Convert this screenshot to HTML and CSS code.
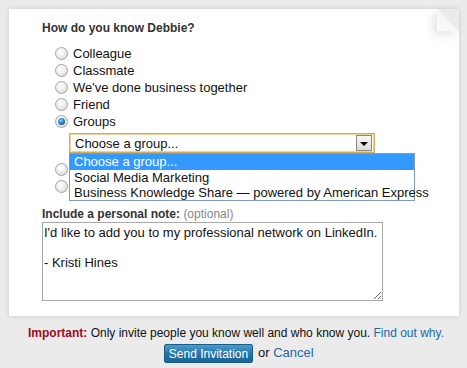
FILE: index.html
```html
<!DOCTYPE html>
<html lang="en">
<head>
    <meta charset="UTF-8">
    <title>Invite Debbie</title>
    <link rel="stylesheet" href="styles.css">
</head>
<body>
    <div class="page">
        <div class="card">
            <div class="fold"><span></span></div>

            <h2 class="question">How do you know Debbie?</h2>

            <ul class="choices">
                <li><span class="radio"></span>Colleague</li>
                <li><span class="radio"></span>Classmate</li>
                <li><span class="radio"></span>We've done business together</li>
                <li><span class="radio"></span>Friend</li>
                <li><span class="radio checked"></span>Groups</li>
            </ul>

            <div class="group-picker">
                <div class="select-box">
                    <span>Choose a group...</span>
                    <span class="arrow"></span>
                </div>
                <ul class="dropdown">
                    <li class="active">Choose a group...</li>
                    <li>Social Media Marketing</li>
                    <li>Business Knowledge Share &mdash; powered by American Express</li>
                </ul>
            </div>

            <!-- labels sit under the open dropdown -->
            <ul class="choices">
                <li><span class="radio"></span></li>
                <li><span class="radio"></span></li>
            </ul>

            <div class="note-label"><b>Include a personal note:</b> <span class="optional">(optional)</span></div>
            <textarea class="note">I'd like to add you to my professional network on LinkedIn.

- Kristi Hines</textarea>
        </div>

        <p class="notice"><strong>Important:</strong> Only invite people you know well and who know you. <a href="#">Find out why.</a></p>
        <div class="actions">
            <button class="button">Send Invitation</button>
            <span class="or">or <a href="#">Cancel</a></span>
        </div>
    </div>
</body>
</html>
```

FILE: styles.css
```css
* {
    margin: 0;
    padding: 0;
    box-sizing: border-box;
}

body {
    background: #ebebeb;
    font-family: 'Liberation Sans', Arial, sans-serif;
    color: #111;
    width: 467px;
    height: 368px;
    overflow: hidden;
}

.page {
    padding: 9px 8px 0 9px;
}

.card {
    position: relative;
    width: 450px;
    background: #fff;
    padding: 12px 33px 15px 33px;
    box-shadow: 0 0 5px rgba(0, 0, 0, 0.13);
}

/* turned page corner */
.fold {
    position: absolute;
    top: 0;
    right: 0;
    width: 22px;
    height: 22px;
    background: linear-gradient(to bottom left, #ebebeb 50%, transparent 50%);
    filter: drop-shadow(-4px 4px 4px rgba(0, 0, 0, 0.1));
}

.fold span {
    display: block;
    width: 100%;
    height: 100%;
    background: linear-gradient(to top right, #fcfcfc, #f0f0f0);
    clip-path: polygon(0 0, 0 100%, 100% 100%);
}

.question {
    font-size: 12px;
    line-height: 15px;
    color: #333;
}

.choices {
    list-style: none;
    margin-top: 9px;
    padding-left: 13px;
}

.choices li {
    display: flex;
    align-items: center;
    gap: 5px;
    height: 17px;
    font-size: 13px;
}

.radio {
    width: 13px;
    height: 13px;
    border-radius: 50%;
    border: 1px solid #a4a4a4;
    background: radial-gradient(circle at 40% 35%, #fff 0%, #f1f1f1 40%, #cfcfcf 100%);
    position: relative;
}

.radio.checked::after {
    content: '';
    position: absolute;
    top: 2px;
    left: 2px;
    width: 7px;
    height: 7px;
    border-radius: 50%;
    background: radial-gradient(circle at 40% 35%, #8ed0f5 0%, #2a82c0 45%, #0c3f6a 100%);
}

.group-picker {
    position: relative;
    margin: 3px 0 8px 27px;
    width: 306px;
}

.group-picker + .choices {
    margin-top: 0;
}

.select-box {
    display: flex;
    align-items: center;
    justify-content: space-between;
    height: 20px;
    border: 1px solid #d8ab52;
    box-shadow: inset 0 0 0 1px #ecd39a;
    padding: 0 2px 0 5px;
    font-size: 13px;
    background: #fff;
}

.arrow {
    position: relative;
    width: 16px;
    height: 16px;
    border: 1px solid #8a8a8a;
    background: linear-gradient(#f6f6f6, #dcdcdc);
}

.arrow::after {
    content: '';
    position: absolute;
    top: 6px;
    left: 3px;
    border-left: 4px solid transparent;
    border-right: 4px solid transparent;
    border-top: 4px solid #000;
}

.dropdown {
    position: absolute;
    top: 20px;
    left: 0;
    width: 346px;
    list-style: none;
    background: #fff;
    border: 1px solid #7f9db9;
    z-index: 2;
}

.dropdown li {
    height: 15px;
    line-height: 15px;
    font-size: 13px;
    padding-left: 4px;
    white-space: nowrap;
    color: #111;
}

.dropdown li.active {
    background: #3399ff;
    color: #fff;
    height: 16px;
}

.choices + .note-label {
    margin-top: 12px;
}

.note-label {
    font-size: 12px;
    line-height: 15px;
    color: #333;
}

.optional {
    color: #888;
}

.note {
    display: block;
    width: 341px;
    height: 79px;
    border: 1px solid #a9a9a9;
    padding: 2px 1px;
    font-family: 'Liberation Sans', Arial, sans-serif;
    font-size: 13px;
    line-height: 15px;
    color: #111;
    resize: both;
}

.notice {
    margin-top: 10px;
    font-size: 12px;
    line-height: 15px;
    text-align: center;
    color: #111;
    padding-left: 4px;
}

.notice strong {
    color: #9b0d1e;
}

a {
    color: #2468a6;
    text-decoration: none;
}

.actions {
    display: flex;
    align-items: center;
    gap: 5px;
    margin-top: 3px;
    padding-left: 155px;
}

.button {
    width: 89px;
    height: 19px;
    border: 1px solid #195c89;
    border-radius: 2px;
    background: linear-gradient(#4b9ccb, #2274a8 55%, #1b6598);
    color: #fff;
    font-family: 'Liberation Sans', Arial, sans-serif;
    font-size: 12px;
}

.or {
    font-size: 13px;
    margin-top: -3px;
}
```
